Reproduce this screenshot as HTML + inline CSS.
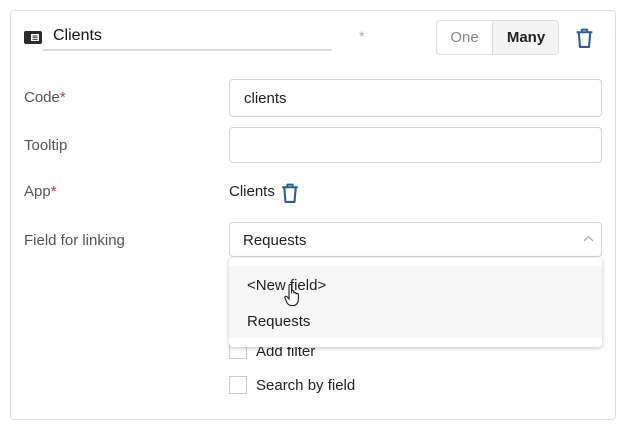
<!DOCTYPE html>
<html><head><style>
*{box-sizing:border-box;margin:0;padding:0}
body{width:626px;height:429px;background:#fff;font-family:"Liberation Sans",sans-serif;position:relative;overflow:hidden;color:#333}
.a{position:absolute}
.card{left:10px;top:10px;width:606px;height:410px;border:1px solid #ddd;border-radius:4px}
.lbl{left:24px;font-size:15px;color:#555}
.inp{left:229px;width:373px;border:1px solid #d5d5d5;border-radius:4px;background:#fff}
.star{color:#d9342b}
.cb{left:229px;width:18px;height:18px;border:1px solid #ccc;background:#fff}
</style></head><body>
<div class="a card"></div>
<svg class="a" style="left:24px;top:31px" width="18" height="13" viewBox="0 0 18 13"><rect x="0" y="0" width="18" height="13" rx="2" fill="#2b2b2b"/><rect x="7" y="3" width="8" height="7" fill="#fff"/><path d="M8.5 5h5M8.5 6.7h5M8.5 8.4h5" stroke="#2b2b2b" stroke-width="0.9"/></svg>
<div class="a" style="left:53px;top:27px;font-size:16px;color:#111">Clients</div>
<div class="a" style="left:43px;top:49px;width:289px;height:2px;background:#ddd"></div>
<div class="a" style="left:359px;top:28px;font-size:14px;color:#aaa">*</div>
<div class="a" style="left:436px;top:20px;width:123px;height:35px;border:1px solid #ddd;border-radius:4px;overflow:hidden">
<div class="a" style="left:0;top:0;width:55px;height:33px;line-height:33px;text-align:center;font-size:15px;color:#888">One</div>
<div class="a" style="left:55px;top:0;width:67px;height:33px;line-height:33px;text-align:center;font-size:15px;color:#222;background:#f4f4f4;border-left:1px solid #ddd;font-weight:bold">Many</div>
</div>
<svg class="a" style="left:574px;top:27px" width="21" height="22" viewBox="0 0 19 21"><path d="M2 5h15M7 5V2.5h5V5M4 5l1.2 14h8.6L15 5" fill="none" stroke="#2d5f95" stroke-width="2" stroke-linejoin="round"/></svg>
<div class="a lbl" style="top:89px">Code<span class="star">*</span></div>
<div class="a inp" style="top:79px;height:38px"></div>
<div class="a" style="left:244px;top:90px;font-size:15px;color:#222">clients</div>
<div class="a lbl" style="top:137px">Tooltip</div>
<div class="a inp" style="top:127px;height:36px"></div>
<div class="a lbl" style="top:183px">App<span class="star">*</span></div>
<div class="a" style="left:229px;top:183px;font-size:15px;color:#222">Clients</div>
<svg class="a" style="left:280px;top:182px" width="20" height="22" viewBox="0 0 19 21"><path d="M2 5h15M7 5V2.5h5V5M4 5l1.2 14h8.6L15 5" fill="none" stroke="#2d5f95" stroke-width="2" stroke-linejoin="round"/></svg>
<div class="a lbl" style="top:232px">Field for linking</div>
<div class="a inp" style="top:222px;height:35px"></div>
<div class="a" style="left:243px;top:232px;font-size:15px;color:#222">Requests</div>
<svg class="a" style="left:583px;top:235px" width="11" height="7" viewBox="0 0 11 7"><path d="M1 6l4.5-4.5L10 6" fill="none" stroke="#aaa" stroke-width="1.3"/></svg>
<div class="a cb" style="top:341px"></div>
<div class="a" style="left:256px;top:343px;font-size:15px;color:#222">Add filter</div>
<div class="a cb" style="top:376px"></div>
<div class="a" style="left:256px;top:377px;font-size:15px;color:#222">Search by field</div>
<div class="a" style="left:229px;top:258px;width:373px;height:89px;background:#fff;border-radius:4px;box-shadow:0 1px 4px rgba(0,0,0,.25)">
<div class="a" style="left:0;top:8px;width:373px;height:72px;background:#f7f7f7"></div>
<div class="a" style="left:18px;top:19px;font-size:15px;color:#222">&lt;New field&gt;</div>
<div class="a" style="left:18px;top:55px;font-size:15px;color:#222">Requests</div>
</div>
<svg class="a" style="left:284px;top:283px" width="20" height="24" viewBox="0 0 20 24"><path d="M5 2.5c0-1.5 2.5-1.5 2.5 0v8l0-2c0-1.4 2.3-1.4 2.3 0v2c0-1.4 2.3-1.4 2.3 0v1c0-1.4 2.3-1.4 2.3 0v5c0 3-2 6-5 6h-2c-2 0-3.5-1-4.5-3L1 15c-.8-1.4 1-2.5 2-1.3L5 16z" fill="#fff" stroke="#222" stroke-width="1.1"/></svg>
</body></html>
